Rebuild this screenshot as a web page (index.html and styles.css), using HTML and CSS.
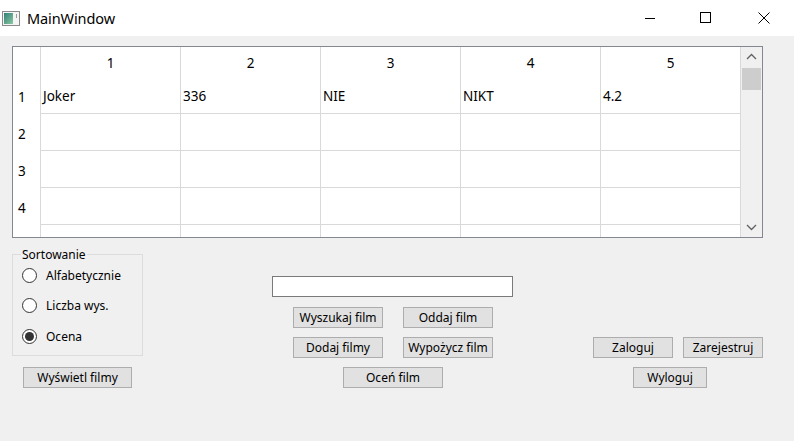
FILE: index.html
```html
<!DOCTYPE html>
<html>
<head>
<meta charset="utf-8">
<link rel="stylesheet" href="styles.css">
</head>
<body>
<div class="window">
  <div class="titlebar">
    <svg class="app-icon" width="18" height="15" viewBox="0 0 18 15">
      <defs>
        <linearGradient id="g" x1="0" y1="0" x2="1" y2="1">
          <stop offset="0" stop-color="#2f7f78"/>
          <stop offset="1" stop-color="#8cc9a2"/>
        </linearGradient>
      </defs>
      <rect x="0.5" y="0.5" width="17" height="14" fill="#f4f4f4" stroke="#8a8a8a"/>
      <rect x="2" y="2" width="9" height="11" fill="url(#g)"/>
      <line x1="14.5" y1="3" x2="14.5" y2="7" stroke="#9a9a9a"/>
    </svg>
    <span class="title">MainWindow</span>
    <div class="controls">
      <span class="ctl"><svg width="12" height="12" viewBox="0 0 12 12"><line x1="1" y1="6.5" x2="11" y2="6.5" stroke="#000"/></svg></span>
      <span class="ctl"><svg width="12" height="12" viewBox="0 0 12 12"><rect x="0.5" y="0.5" width="10" height="10" fill="none" stroke="#000"/></svg></span>
      <span class="ctl"><svg width="12" height="12" viewBox="0 0 12 12"><path d="M0.5 0.5 L11.5 11.5 M11.5 0.5 L0.5 11.5" stroke="#000" stroke-width="1"/></svg></span>
    </div>
  </div>

  <div class="client">
    <div class="table">
      <div class="grid">
        <div class="hc corner"></div>
        <div class="hc">1</div>
        <div class="hc">2</div>
        <div class="hc">3</div>
        <div class="hc">4</div>
        <div class="hc">5</div>

        <div class="vh">1</div>
        <div class="cell">Joker</div>
        <div class="cell">336</div>
        <div class="cell">NIE</div>
        <div class="cell">NIKT</div>
        <div class="cell">4.2</div>

        <div class="vh">2</div>
        <div class="cell"></div><div class="cell"></div><div class="cell"></div><div class="cell"></div><div class="cell"></div>
        <div class="vh">3</div>
        <div class="cell"></div><div class="cell"></div><div class="cell"></div><div class="cell"></div><div class="cell"></div>
        <div class="vh">4</div>
        <div class="cell"></div><div class="cell"></div><div class="cell"></div><div class="cell"></div><div class="cell"></div>
        <div class="vh">5</div>
        <div class="cell"></div><div class="cell"></div><div class="cell"></div><div class="cell"></div><div class="cell"></div>
      </div>
      <div class="scrollbar">
        <svg class="arrow" width="21" height="17" viewBox="0 0 21 17"><polyline points="6,12 10.5,7.5 15,12" fill="none" stroke="#606060" stroke-width="1.3"/></svg>
        <div class="thumb"></div>
        <div class="track"></div>
        <svg class="arrow" width="21" height="17" viewBox="0 0 21 17"><polyline points="6,5 10.5,9.5 15,5" fill="none" stroke="#606060" stroke-width="1.3"/></svg>
      </div>
    </div>

    <div class="bottom">
      <div class="col-left">
        <fieldset class="group">
          <legend>Sortowanie</legend>
          <div class="radios">
            <label class="radio"><span class="dot"></span>Alfabetycznie</label>
            <label class="radio"><span class="dot"></span>Liczba wys.</label>
            <label class="radio"><span class="dot on"></span>Ocena</label>
          </div>
        </fieldset>
        <div class="btn btn-show">Wyświetl filmy</div>
      </div>

      <div class="col-mid">
        <div class="input"></div>
        <div class="btn-grid">
          <div class="btn w90">Wyszukaj film</div>
          <div class="btn w90">Oddaj film</div>
          <div class="btn w90">Dodaj filmy</div>
          <div class="btn w90">Wypożycz film</div>
        </div>
        <div class="btn btn-rate">Oceń film</div>
      </div>

      <div class="col-right">
        <div class="row-login">
          <div class="btn w80">Zaloguj</div>
          <div class="btn w80">Zarejestruj</div>
        </div>
        <div class="btn btn-logout">Wyloguj</div>
      </div>
    </div>
  </div>
</div>
</body>
</html>
```

FILE: styles.css
```css
* { box-sizing: border-box; }
html, body { margin: 0; padding: 0; }
body {
  background: #f0f0f0;
  font-family: "Noto Sans", "Open Sans", sans-serif;
  color: #000;
}
.window {
  width: 794px;
  height: 441px;
  background: #f0f0f0;
  overflow: hidden;
}
.titlebar {
  height: 36px;
  background: #fff;
  display: flex;
  align-items: center;
}
.app-icon { margin-left: 2px; margin-top: 0; }
.title {
  margin-left: 7px;
  font-size: 14.5px;
  color: #000;
  letter-spacing: -0.1px;
}
.controls {
  margin-left: auto;
  display: flex;
  height: 36px;
}
.ctl {
  width: 57px;
  height: 36px;
  display: flex;
  align-items: center;
  justify-content: center;
}
.ctl:first-child { width: 54px; }
.ctl:last-child { width: 60px; }

.client {
  padding: 10px 0 0 12px;
}
.table {
  width: 751px;
  height: 192px;
  border: 1px solid #828790;
  background: #fff;
  display: flex;
  overflow: hidden;
}
.grid {
  width: 728px;
  height: 190px;
  display: grid;
  grid-template-columns: 28px repeat(5, 140px);
  grid-template-rows: 30px repeat(5, 37px);
  overflow: hidden;
  font-size: 13.5px;
}
.hc {
  border-right: 1px solid #d9d9d9;
  display: flex;
  align-items: center;
  justify-content: center;
  padding-top: 2px;
}
.vh {
  border-right: 1px solid #d9d9d9;
  display: flex;
  align-items: center;
  padding-left: 5px;
  padding-top: 2px;
}
.cell {
  border-right: 1px solid #d9d9d9;
  border-bottom: 1px solid #d9d9d9;
  display: flex;
  align-items: center;
  padding-left: 2px;
  padding-top: 2px;
}
.scrollbar {
  width: 21px;
  height: 190px;
  background: #f0f0f0;
  display: flex;
  flex-direction: column;
}
.arrow { display: block; flex: none; }
.thumb {
  height: 22px;
  margin: 4px 1px 0 1px;
  background: #cdcdcd;
  flex: none;
}
.track { flex: 1; }

.bottom {
  display: flex;
  align-items: flex-start;
}
.col-left {
  width: 131px;
  display: flex;
  flex-direction: column;
}
.group {
  margin: 9px 0 0 0;
  padding: 0 0 0 9px;
  width: 131px;
  height: 109px;
  border: 1px solid #dcdcdc;
  min-width: 0;
}
.group legend {
  font-size: 12px;
  line-height: 15px;
  padding: 0 1px;
  margin-left: -1px;
}
.radios {
  margin-top: -2px;
  display: flex;
  flex-direction: column;
}
.radio {
  height: 30.5px;
  display: flex;
  align-items: center;
  font-size: 12px;
}
.dot {
  width: 15px;
  height: 15px;
  border: 1px solid #333;
  border-radius: 50%;
  background: #fff;
  margin-right: 9px;
  display: flex;
  align-items: center;
  justify-content: center;
}
.dot.on::after {
  content: "";
  width: 9px;
  height: 9px;
  border-radius: 50%;
  background: #333;
}
.btn {
  height: 21px;
  background: #e1e1e1;
  border: 1px solid #adadad;
  font-size: 12px;
  display: flex;
  align-items: center;
  justify-content: center;
  white-space: nowrap;
}
.btn-show {
  width: 109px;
  margin: 11px 0 0 11px;
}
.col-mid {
  margin-left: 129px;
  width: 241px;
  display: flex;
  flex-direction: column;
}
.input {
  margin-top: 38px;
  width: 241px;
  height: 21px;
  background: #fff;
  border: 1px solid #7a7a7a;
}
.btn-grid {
  margin: 10px 0 0 21px;
  display: grid;
  grid-template-columns: 90px 90px;
  column-gap: 20px;
  row-gap: 9px;
}
.w90 { width: 90px; }
.btn-rate {
  width: 100px;
  margin: 9px 0 0 71px;
}
.col-right {
  margin-left: 80px;
  display: flex;
  flex-direction: column;
}
.row-login {
  margin-top: 99px;
  display: flex;
  gap: 10px;
}
.w80 { width: 80px; }
.btn-logout {
  width: 74px;
  margin: 9px 0 0 40px;
}
```
